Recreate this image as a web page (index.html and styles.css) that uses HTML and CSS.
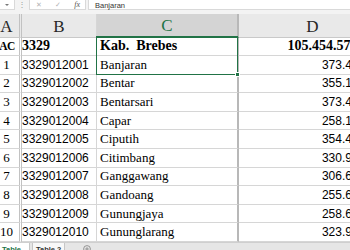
FILE: index.html
```html
<!DOCTYPE html>
<html>
<head>
<meta charset="utf-8">
<link rel="stylesheet" href="styles.css">
</head>
<body>
<div class="app">
  <div class="fbar">
    <div class="namebox"><span class="caret"></span></div>
    <div class="dots">⋮</div>
    <div class="fbtns"><span class="fb">✕</span><span class="fb">✓</span><span class="fx">fx</span></div>
    <div class="finput">Banjaran</div>
  </div>
  <div class="sheet">
    <div class="grid">
      <div class="cell ca hd">A</div><div class="cell cb hd">B</div><div class="cell cc hd hsel">C</div><div class="cell cd hd">D</div>

      <div class="cell ca bold">AC</div><div class="cell cb bold">3329</div><div class="cell cc bold">Kab.&nbsp; Brebes</div><div class="cell cd bold num">105.454.578,314</div>

      <div class="cell ca">1</div><div class="cell cb">3329012001</div><div class="cell cc">Banjaran</div><div class="cell cd">373.452,91</div>
      <div class="cell ca">2</div><div class="cell cb">3329012002</div><div class="cell cc">Bentar</div><div class="cell cd">355.148,20</div>
      <div class="cell ca">3</div><div class="cell cb">3329012003</div><div class="cell cc">Bentarsari</div><div class="cell cd">373.406,12</div>
      <div class="cell ca">4</div><div class="cell cb">3329012004</div><div class="cell cc">Capar</div><div class="cell cd">258.193,55</div>
      <div class="cell ca">5</div><div class="cell cb">3329012005</div><div class="cell cc">Ciputih</div><div class="cell cd">354.427,08</div>
      <div class="cell ca">6</div><div class="cell cb">3329012006</div><div class="cell cc">Citimbang</div><div class="cell cd">330.961,73</div>
      <div class="cell ca">7</div><div class="cell cb">3329012007</div><div class="cell cc">Ganggawang</div><div class="cell cd">306.684,40</div>
      <div class="cell ca">8</div><div class="cell cb">3329012008</div><div class="cell cc">Gandoang</div><div class="cell cd">255.639,17</div>
      <div class="cell ca">9</div><div class="cell cb">3329012009</div><div class="cell cc">Gunungjaya</div><div class="cell cd">258.670,26</div>
      <div class="cell ca">10</div><div class="cell cb">3329012010</div><div class="cell cc">Gununglarang</div><div class="cell cd">323.915,64</div>
    </div>
    <div class="selection"><span class="handle"></span></div>
  </div>
  <div class="tabs">
    <div class="tab active">Table 1</div>
    <div class="tab">Table 2</div>
    <div class="addtab">
      <svg width="8" height="8" viewBox="0 0 8 8"><circle cx="4" cy="4" r="3.4" fill="none" stroke="#8a8a8a" stroke-width="0.9"/><path d="M4 2.2V5.8M2.2 4H5.8" stroke="#8a8a8a" stroke-width="0.9"/></svg>
    </div>
  </div>
</div>
</body>
</html>
```
FILE: styles.css
```css
* { box-sizing: border-box; }
html, body { margin: 0; padding: 0; background: #fff; }
.app {
  width: 350px;
  height: 250px;
  overflow: hidden;
  display: flex;
  flex-direction: column;
}
.fbar {
  flex: none;
  height: 14px;
  display: flex;
  align-items: flex-start;
  background: #f3f3f3;
  font-family: "Liberation Sans", Arial, sans-serif;
}
.namebox {
  width: 15px;
  height: 11px;
  margin-top: -1px;
  background: #fff;
  border: 1px solid #d9d9d9;
  border-left: none;
  display: flex;
  align-items: center;
  justify-content: flex-end;
  padding-right: 5px;
}
.caret {
  width: 0;
  height: 0;
  border-left: 2px solid transparent;
  border-right: 2px solid transparent;
  border-top: 2px solid #777;
}
.dots {
  width: 14px;
  height: 10px;
  text-align: center;
  font-size: 8px;
  line-height: 10px;
  color: #9a9a9a;
}
.fbtns {
  width: 57px;
  height: 11px;
  margin-top: -1px;
  background: #fff;
  border: 1px solid #d9d9d9;
  display: flex;
  align-items: center;
  justify-content: space-between;
  padding: 0 5px 0 6px;
}
.fb { font-size: 7px; line-height: 9px; color: #b3b3b3; }
.fx {
  font-family: "Liberation Serif", serif;
  font-style: italic;
  font-size: 8px;
  line-height: 9px;
  color: #555;
}
.finput {
  flex: 1;
  height: 11px;
  margin-top: -1px;
  margin-left: 2px;
  background: #fff;
  border: 1px solid #d9d9d9;
  border-right: none;
  padding-left: 6px;
  font-size: 7.5px;
  line-height: 11px;
  color: #333;
}
.sheet {
  flex: none;
  height: 228px;
  position: relative;
  overflow: hidden;
}
.grid {
  display: grid;
  grid-template-columns: 28px 75px 142px 148px;
  grid-template-rows: 23.5px repeat(11, 18.6px);
  margin-left: -6px;
  width: 393px;
}
.cell {
  border-right: 1px solid #d6d6d6;
  border-bottom: 1px solid #d6d6d6;
  white-space: nowrap;
  overflow: hidden;
  display: flex;
  align-items: center;
  color: #000;
}
.ca {
  justify-content: center;
  border-right: 3px double #c2c2c2;
  font-family: "Liberation Serif", serif;
  font-size: 13px;
}
.cb {
  padding-left: 0;
  font-family: "Liberation Sans", Arial, sans-serif;
  font-size: 12px;
}
.cc {
  padding-left: 3px;
  border-right: 2px solid #b8b8b8;
  font-family: "Liberation Serif", serif;
  font-size: 13px;
}
.cd {
  justify-content: flex-end;
  padding-right: 4px;
  font-family: "Liberation Sans", Arial, sans-serif;
  font-size: 12px;
}
.bold {
  font-family: "Liberation Serif", serif;
  font-weight: bold;
  font-size: 14px;
}
.ca.bold {
  font-size: 11.5px;
  letter-spacing: -0.4px;
  justify-content: flex-end;
  padding-right: 4px;
}
.hd {
  background: #e9e9e9;
  border-bottom: 1px solid #c9c9c9;
  justify-content: center;
  padding: 3px 0 0 0;
  font-family: "Liberation Serif", serif;
  font-size: 17px;
  font-weight: normal;
  color: #262626;
}
.hsel {
  background: #d4d4d4;
  color: #217346;
  border-bottom: 2px solid #217346;
}
.selection {
  position: absolute;
  left: 96px;
  top: 22px;
  width: 142px;
  height: 39px;
  border: 1px solid #217346;
  pointer-events: none;
}
.handle {
  position: absolute;
  right: -3px;
  bottom: -3px;
  width: 5px;
  height: 5px;
  background: #217346;
  border: 1px solid #fff;
}
.tabs {
  flex: 1;
  display: flex;
  align-items: flex-start;
  background: #e6e6e6;
  border-top: 1px solid #cfcfcf;
  font-family: "Liberation Sans", Arial, sans-serif;
  font-size: 7.5px;
  font-weight: bold;
  line-height: 10px;
}
.tab {
  height: 12px;
  padding: 2px 3px 0 3px;
  color: #333;
  background: #f8f8f8;
  border-right: 1px solid #c6c6c6;
  border-left: 1px solid #c6c6c6;
  margin-left: 2px;
}
.tab.active {
  margin-left: 0;
  border-left: none;
  padding-left: 2px;
  width: 30px;
  background: #fff;
  color: #217346;
}
.addtab {
  margin-left: 18px;
  padding-top: 2px;
  display: flex;
}
```
